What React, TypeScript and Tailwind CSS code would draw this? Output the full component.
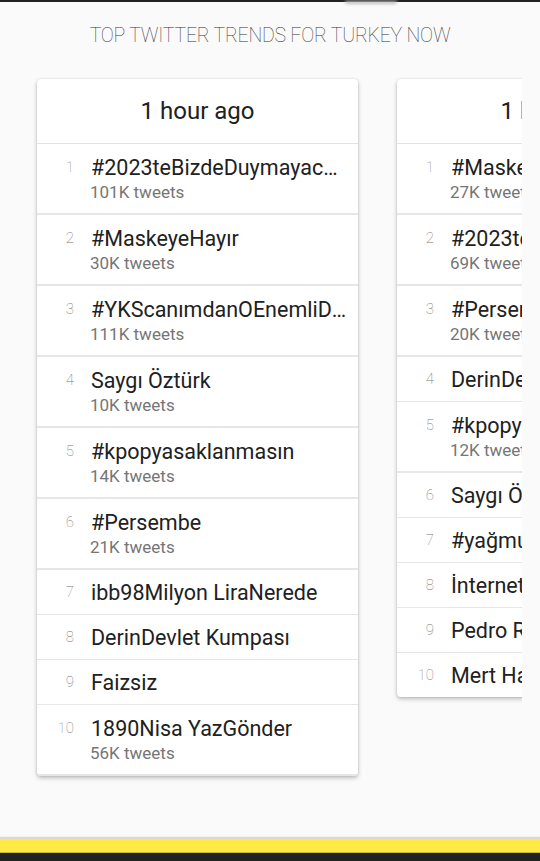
import React from "react";

type Trend = { name: string; tweets?: string };

const columns: { label: string; trends: Trend[] }[] = [
  {
    label: "1 hour ago",
    trends: [
      { name: "#2023teBizdeDuymayacaklarımız", tweets: "101K tweets" },
      { name: "#MaskeyeHayır", tweets: "30K tweets" },
      { name: "#YKScanımdanOEnemliDeğil", tweets: "111K tweets" },
      { name: "Saygı Öztürk", tweets: "10K tweets" },
      { name: "#kpopyasaklanmasın", tweets: "14K tweets" },
      { name: "#Persembe", tweets: "21K tweets" },
      { name: "ibb98Milyon LiraNerede" },
      { name: "DerinDevlet Kumpası" },
      { name: "Faizsiz" },
      { name: "1890Nisa YazGönder", tweets: "56K tweets" },
    ],
  },
  {
    label: "1 hour ago",
    trends: [
      { name: "#MaskeyeHayır", tweets: "27K tweets" },
      { name: "#2023teBizdeDuymayacaklarımız", tweets: "69K tweets" },
      { name: "#Persembe", tweets: "20K tweets" },
      { name: "DerinDevlet Kumpası" },
      { name: "#kpopyasaklanmasın", tweets: "12K tweets" },
      { name: "Saygı Öztürk" },
      { name: "#yağmurlar" },
      { name: "İnternet" },
      { name: "Pedro Rocha" },
      { name: "Mert Hakan" },
    ],
  },
];

function TrendCard({ label, trends }: { label: string; trends: Trend[] }) {
  return (
    <div className="w-[321px] shrink-0 bg-white rounded-[4px] shadow-[0_2px_4px_rgba(0,0,0,0.25),0_0_2px_rgba(0,0,0,0.12)] overflow-hidden">
      <div className="h-[65px] flex items-center justify-center border-b border-[#e3e3e3] text-[24px] text-[#212121]">
        {label}
      </div>
      {trends.map((t, i) => (
        <div
          key={i}
          className={
            "flex " +
            (t.tweets
              ? "pt-[10px] pb-[10px] border-b-2 border-[#e6e6e6]"
              : "pt-[9px] pb-[8px] border-b border-[#e6e6e6]") +
            (i === trends.length - 1 ? " border-b-0" : "")
          }
        >
          <div className="w-[37px] shrink-0 text-right text-[15px] leading-[27px] font-thin text-[#777]">
            {i + 1}
          </div>
          <div className="min-w-0 flex-1 pl-[17px] pr-[9px]">
            <div className="text-[21.5px] leading-[27px] text-[#212121] truncate">{t.name}</div>
            {t.tweets && (
              <div className="text-[17px] leading-[22px] text-[#757575] -ml-px">{t.tweets}</div>
            )}
          </div>
        </div>
      ))}
    </div>
  );
}

export default function App() {
  return (
    <div
      className="h-[861px] w-[540px] flex flex-col bg-[#fafafa] overflow-hidden"
      style={{ fontFamily: "Roboto, 'Noto Sans', sans-serif" }}
    >
      <div className="relative h-[2px] bg-[#222] shrink-0">
        <div className="absolute left-[345px] top-[1px] w-[52px] h-[3px] rounded-b-full bg-[#bbb] blur-[1.5px]" />
      </div>
      <div className="h-[62px] flex items-center justify-center pt-[5px] text-[19.5px] font-thin tracking-[-0.2px] text-[#333]">
        TOP TWITTER TRENDS FOR TURKEY NOW
      </div>
      <div className="w-[522px] overflow-hidden flex items-start gap-[39px] pl-[37px] pt-[15px] pb-[8px]">
        {columns.map((c, i) => (
          <TrendCard key={i} label={c.label} trends={c.trends} />
        ))}
      </div>
      <div className="flex-1" />
      <div className="shrink-0 h-[1px] bg-[#eef2f5]" />
      <div className="shrink-0 h-[2px] bg-[#ddd8c8]" />
      <div className="shrink-0 h-[13px] bg-[#ffea45]" />
      <div className="shrink-0 h-[1px] bg-[#c9b93c]" />
      <div className="shrink-0 h-[8px] bg-[#222]" />
    </div>
  );
}
